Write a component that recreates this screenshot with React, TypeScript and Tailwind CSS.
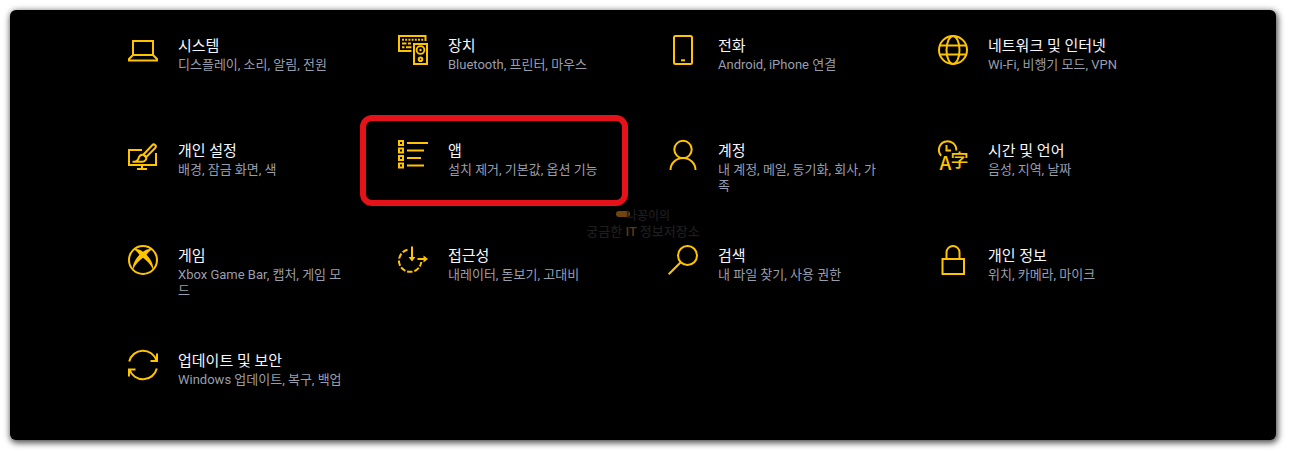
import type { ReactNode } from 'react'

type Category = {
  title: string
  description: string
  icon: ReactNode
  highlighted?: boolean
}

const categories: Category[] = [
  {
    title: '시스템',
    description: '디스플레이, 소리, 알림, 전원',
    icon: (
      <>
        <path d="M5 6h20v14H5z" />
        <path d="M5 20l-4 4v1.5h28V24l-4-4" />
      </>
    ),
  },
  {
    title: '장치',
    description: 'Bluetooth, 프린터, 마우스',
    icon: (
      <>
        <path d="M27.5 6V1H1v15h12.5" />
        <path d="M4 4.8h21.5" strokeDasharray="2 1.2" />
        <path d="M4 8.5h4.5M10 8.5h3M4 12.2h2.5M8 12.2h5.5" />
        <path d="M16 9h13v20H16z" />
        <circle cx="22.5" cy="15" r="3.9" strokeWidth="1.8" />
        <circle cx="22.5" cy="15" r="1.2" fill="currentColor" stroke="none" />
        <circle cx="22.5" cy="24.3" r="1.8" />
      </>
    ),
  },
  {
    title: '전화',
    description: 'Android, iPhone 연결',
    icon: (
      <>
        <rect x="6" y="1" width="18" height="28" rx="1.5" />
        <path d="M13 25.3h4" />
      </>
    ),
  },
  {
    title: '네트워크 및 인터넷',
    description: 'Wi-Fi, 비행기 모드, VPN',
    icon: (
      <>
        <circle cx="15" cy="15" r="14" />
        <ellipse cx="15" cy="15" rx="6.5" ry="14" />
        <path d="M2 10.5h26M2 19.5h26" />
      </>
    ),
  },
  {
    title: '개인 설정',
    description: '배경, 잠금 화면, 색',
    icon: (
      <>
        <path d="M14 10H1v15h27V13" />
        <path d="M14 25v4M9 29h10" />
        <path d="M15.5 14.5L24.2 5.2a2 2 0 0 1 3 2.8L18.4 17z" />
        <path d="M15.3 14.8l3 2.6c.4 2-1.6 4.4-4 4.4H4.5c3.5 0 5.3-.8 6-3.3.6-2.2 2.6-3.9 4.8-3.7z" />
      </>
    ),
  },
  {
    title: '앱',
    description: '설치 제거, 기본값, 옵션 기능',
    highlighted: true,
    icon: (
      <>
        <path d="M1 1h4v4H1zM1 8.5h4v4H1zM1 16h4v4H1zM1 23.5h4v4H1z" />
        <path d="M9 3h21M9 10.5h17M9 18h14M9 25.5h17" />
      </>
    ),
  },
  {
    title: '계정',
    description: '내 계정, 메일, 동기화, 회사, 가족',
    icon: (
      <>
        <circle cx="15" cy="9.5" r="8.7" />
        <path d="M2.5 30a12.5 12 0 0 1 25 0" />
      </>
    ),
  },
  {
    title: '시간 및 언어',
    description: '음성, 지역, 날짜',
    icon: (
      <>
        <path d="M3.2 15.8A8.7 8.7 0 1 1 18.3 10.5" />
        <path d="M8.5 5v5.5h4.5" />
        <g fill="currentColor" stroke="none" fontFamily="Noto Sans CJK JP, sans-serif">
          <text x="1.5" y="30" fontSize="19" fontWeight="500">A</text>
          <text x="12.5" y="27" fontSize="18" fontWeight="500">字</text>
        </g>
      </>
    ),
  },
  {
    title: '게임',
    description: 'Xbox Game Bar, 캡처, 게임 모드',
    icon: (
      <>
        <circle cx="15" cy="15" r="14" />
        <path
          d="M6 4.5c3-1.2 6.5.5 9 2.300 2.500-1.800 6-3.500 9-2.300-2 1.200-4 3.200-5.500 5.300C22 13.500 26 19.500 25 24.500 23 19.500 18.500 15.500 15 12.800 11.500 15.500 7 19.500 5 24.500 4 19.500 8 13.500 11.500 9.800 10 7.700 8 5.700 6 4.500z"
          fill="currentColor"
          stroke="none"
        />
      </>
    ),
  },
  {
    title: '접근성',
    description: '내레이터, 돋보기, 고대비',
    icon: (
      <>
        <path d="M9.500 4.800A11.200 11.200 0 1 0 23.300 17" strokeDasharray="5.500 1.800" />
        <path d="M14 1.500V14M19.500 14H28" />
        <path d="M10.500 12h7L14 16.500zM25.500 10.500v7L30 14z" fill="currentColor" stroke="none" />
      </>
    ),
  },
  {
    title: '검색',
    description: '내 파일 찾기, 사용 권한',
    icon: (
      <>
        <circle cx="19.5" cy="10.5" r="9.5" />
        <path d="M13 17L.7 29.3" />
      </>
    ),
  },
  {
    title: '개인 정보',
    description: '위치, 카메라, 마이크',
    icon: (
      <>
        <path d="M4.500 14h21.500v15H4.500z" />
        <path d="M8.500 14V7.500a6.500 6.500 0 0 1 13 0V14" />
      </>
    ),
  },
  {
    title: '업데이트 및 보안',
    description: 'Windows 업데이트, 복구, 백업',
    icon: (
      <>
        <path d="M1.200 11.500A14.200 14.200 0 0 1 28.500 10.500" />
        <path d="M29 3.500V11h-6.500" />
        <path d="M28.800 18.500A14.200 14.200 0 0 1 1.500 19.500" />
        <path d="M1 26.500V19.500h6.500" />
      </>
    ),
  },
]

function CategoryLink({ title, description, icon, highlighted }: Category) {
  return (
    <a href="#" className="relative flex items-start gap-5">
      <svg
        viewBox="0 0 30 30"
        className="size-[30px] shrink-0 overflow-visible text-[#ffc400]"
        fill="none"
        stroke="currentColor"
        strokeWidth="2"
        aria-hidden="true"
      >
        {icon}
      </svg>
      <div className="min-w-0 flex-1 pt-px pr-1">
        <h2 className="mb-px text-[15px] leading-5 text-[#f6f6ff]">{title}</h2>
        <p className="text-[13px] leading-4 text-[#989eae]">{description}</p>
      </div>
      {highlighted && (
        <span className="pointer-events-none absolute -top-[25px] -right-[10px] -bottom-[11px] -left-[38px] rounded-xl border-6 border-[#e6121a]" />
      )}
    </a>
  )
}

export default function App() {
  return (
    <div className="bg-white pt-[10px] pr-[14px] pb-[14px] pl-[10px] font-[Roboto,'Noto_Sans_CJK_KR',sans-serif]">
      <main className="relative rounded-md bg-black px-10 pt-[25px] pb-[35px] shadow-[1px_2px_6px_1px_rgba(0,0,0,0.7)]">
        <nav className="grid auto-rows-[minmax(55px,auto)] grid-cols-[repeat(auto-fill,220px)] justify-center gap-[50px]">
          {categories.map((category) => (
            <CategoryLink key={category.title} {...category} />
          ))}
        </nav>

        {/* Watermark */}
        <div className="pointer-events-none absolute inset-x-0 top-[198px] text-center text-[13px] leading-4 font-medium text-[#1d1d1d]">
          <div className="flex items-center justify-center text-xs leading-4">
            <span className="-mr-1 mb-1 h-[6px] w-[14px] rounded-full bg-[#704510]" />
            <span>나꽁이의</span>
          </div>
          <div>
            궁금한 <span className="text-[#5c390c]">IT</span> 정보저장소
          </div>
        </div>
      </main>
    </div>
  )
}
